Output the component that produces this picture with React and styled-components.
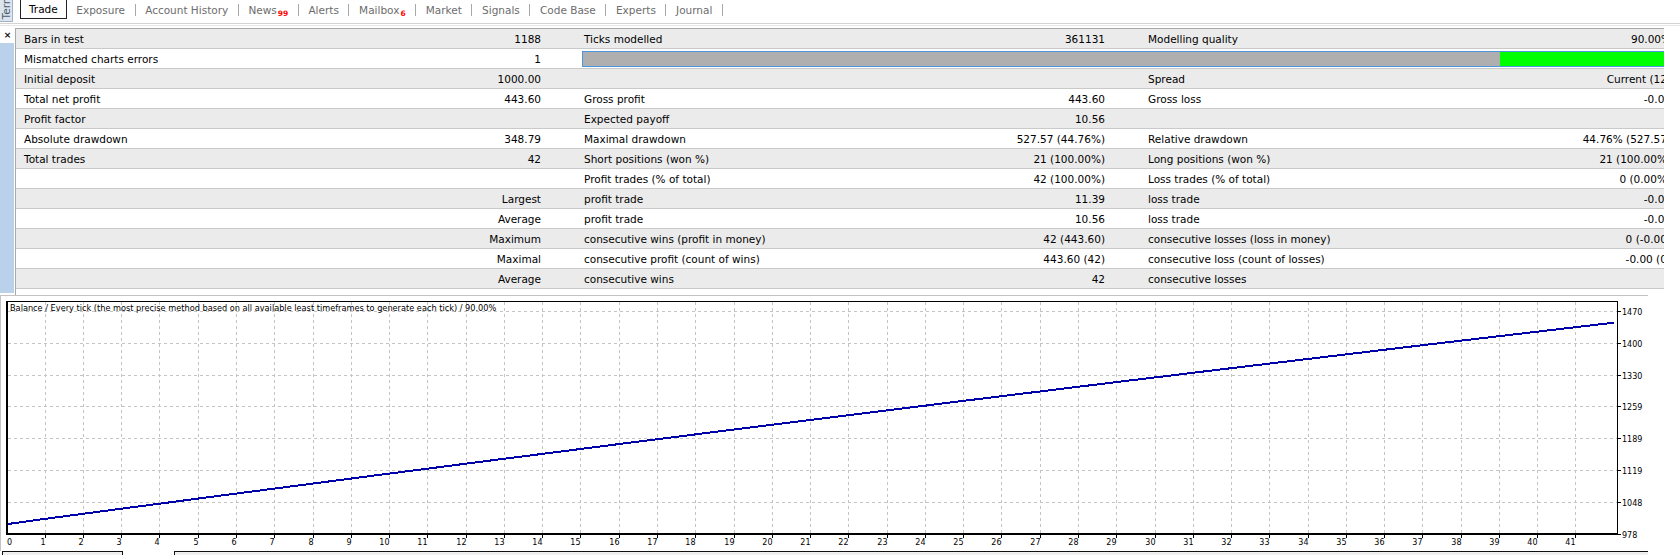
import React from 'react';
import styled, { createGlobalStyle } from 'styled-components';

const GlobalStyle = createGlobalStyle`
  html, body { margin: 0; padding: 0; background: #ffffff; }
  #root { width: 1680px; height: 555px; }
`;

const Page = styled.div`
  width: 1680px;
  height: 555px;
  overflow: hidden;
  background: #ffffff;
  display: flex;
  flex-direction: column;
  font-family: "DejaVu Sans", Verdana, sans-serif;
  font-size: 10.5px;
  color: #000;
`;

/* ---------- top tab bar ---------- */
const TopBar = styled.div`
  height: 23px;
  flex: none;
  display: flex;
  align-items: flex-start;
`;

const CaptionStub = styled.div`
  width: 13px;
  height: 22px;
  flex: none;
  box-sizing: border-box;
  background: #dce5ef;
  border-right: 1px solid #a3b1c2;
  border-bottom: 1px solid #a3b1c2;
  display: flex;
  flex-direction: column;
  justify-content: flex-end;
  align-items: center;
  overflow: hidden;
`;

const CaptionText = styled.span`
  writing-mode: vertical-rl;
  transform: rotate(180deg);
  white-space: nowrap;
  color: #4b5b6c;
  font-size: 10.5px;
  line-height: 12px;
  padding-top: 2px;
`;

const Tabs = styled.div`
  display: flex;
  align-items: flex-start;
  margin-left: 7px;
`;

const Tab = styled.div`
  height: 19px;
  box-sizing: border-box;
  padding: 0 9.6px;
  display: flex;
  align-items: center;
  white-space: nowrap;
  color: #6d6d6d;
`;

const ActiveTab = styled(Tab)`
  padding: 0 8px;
  color: #000;
  background: #fff;
  border: 1px solid #222;
  border-top: none;
`;

const TabSep = styled.div`
  width: 1px;
  height: 12px;
  margin-top: 4px;
  background: #a8a8a8;
  flex: none;
`;

const Badge = styled.span`
  align-self: flex-end;
  margin: 0 0 1px 1px;
  color: #ff0000;
  font-size: 7.5px;
  line-height: 8px;
  font-weight: bold;
`;

const Divider = styled.div`
  height: 3px;
  flex: none;
  box-sizing: border-box;
  border-top: 1px solid #d3d3d3;
  border-bottom: 1px solid #e6e6e6;
  margin-bottom: 2px;
`;

/* ---------- report table ---------- */
const TesterArea = styled.div`
  height: 267px;
  flex: none;
  display: flex;
`;

const SideCaption = styled.div`
  width: 15px;
  flex: none;
  display: flex;
  flex-direction: column;
`;

const CloseMark = styled.div`
  height: 15px;
  padding-bottom: 2px;
  box-sizing: border-box;
  display: flex;
  align-items: center;
  justify-content: center;
  font-size: 9px;
  font-weight: bold;
  color: #111;
`;

const BlueStrip = styled.div`
  flex: 1;
  margin: 0 1px 2px 0;
  background: #b9d1ea;
`;

const Report = styled.div`
  width: 1649px;
  flex: none;
  box-sizing: border-box;
  border-left: 1px solid #a9a9a9;
  border-top: 1px solid #a9a9a9;
  overflow: hidden;
  background: #fff;
`;

const Row = styled.div`
  display: grid;
  grid-template-columns: 562px 564px 566px;
  height: 20px;
  box-sizing: border-box;
  border-bottom: 1px solid #c9c9c9;
  background: ${(p) => (p.$alt ? '#ebebeb' : '#ffffff')};
  width: max-content;
`;

const Cell = styled.div`
  display: flex;
  align-items: center;
  justify-content: space-between;
  padding: 1px 37px 0 ${(p) => (p.$first ? 8 : 6)}px;
  white-space: nowrap;
  min-width: 0;
`;

const QualityCell = styled.div`
  grid-column: 2 / span 2;
  padding: 2px 0 1px 4px;
  display: flex;
`;

const QualityBar = styled.div`
  flex: 1;
  display: flex;
  box-sizing: border-box;
  border: 1px solid #4d94e0;
`;

const BarPart = styled.div`
  flex: ${(p) => (p.$grow ? '1' : `0 0 ${p.$w}px`)};
  background: ${(p) => p.$color};
`;

/* ---------- chart ---------- */
const ChartArea = styled.div`
  width: 1648px;
  height: 256px;
  flex: none;
  box-sizing: border-box;
  border-top: 1px solid #c3c3c3;
  border-left: 1px solid #c3c3c3;
  position: relative;
`;

const ChartTitle = styled.div`
  position: absolute;
  left: 9px;
  top: 8px;
  font-size: 8.2px;
  line-height: 9px;
  white-space: nowrap;
  color: #000;
`;

const ChartSvg = styled.svg`
  display: block;
`;

/* ---------- bottom tabs ---------- */
const BottomBar = styled.div`
  height: 4px;
  flex: none;
  display: flex;
`;

const BottomTab = styled.div`
  width: 121px;
  margin-left: 2px;
  box-sizing: border-box;
  border: 1px solid #111;
  border-bottom: none;
  background: #f0f0f0;
`;

const BottomStrip = styled.div`
  width: 1474px;
  margin-left: 51px;
  box-sizing: border-box;
  border-top: 1px solid #111;
  border-left: 1px solid #111;
  background: #f0f0f0;
`;

const TAB_ITEMS = [
  { label: 'Exposure' },
  { label: 'Account History' },
  { label: 'News', badge: '99' },
  { label: 'Alerts' },
  { label: 'Mailbox', badge: '6' },
  { label: 'Market' },
  { label: 'Signals' },
  { label: 'Code Base' },
  { label: 'Experts' },
  { label: 'Journal' },
];

const ROWS = [
  [['Bars in test', '1188'], ['Ticks modelled', '361131'], ['Modelling quality', '90.00%']],
  'bar',
  [['Initial deposit', '1000.00'], ['', ''], ['Spread', 'Current (12)']],
  [['Total net profit', '443.60'], ['Gross profit', '443.60'], ['Gross loss', '-0.00']],
  [['Profit factor', ''], ['Expected payoff', '10.56'], ['', '']],
  [['Absolute drawdown', '348.79'], ['Maximal drawdown', '527.57 (44.76%)'], ['Relative drawdown', '44.76% (527.57)']],
  [['Total trades', '42'], ['Short positions (won %)', '21 (100.00%)'], ['Long positions (won %)', '21 (100.00%)']],
  [['', ''], ['Profit trades (% of total)', '42 (100.00%)'], ['Loss trades (% of total)', '0 (0.00%)']],
  [['', 'Largest'], ['profit trade', '11.39'], ['loss trade', '-0.00']],
  [['', 'Average'], ['profit trade', '10.56'], ['loss trade', '-0.00']],
  [['', 'Maximum'], ['consecutive wins (profit in money)', '42 (443.60)'], ['consecutive losses (loss in money)', '0 (-0.00)']],
  [['', 'Maximal'], ['consecutive profit (count of wins)', '443.60 (42)'], ['consecutive loss (count of losses)', '-0.00 (0)']],
  [['', 'Average'], ['consecutive wins', '42'], ['consecutive losses', '0']],
];

const Y_LABELS = [978, 1048, 1119, 1189, 1259, 1330, 1400, 1470];

function BalanceChart() {
  const W = 1647;
  const H = 255;
  const left = 5.4;
  const step = 38.27;
  const bottom = 238;
  const labelStep = 31.9;
  const yOf = (v) => bottom - ((v - 978) / 70.2857) * labelStep;
  const xOf = (k) => left + step * k;

  const a = 11.25;
  const b = 9.87;
  const raw = Array.from({ length: 42 }, (_, j) => a - ((a - b) * j) / 41);
  const total = raw.reduce((s, v) => s + v, 0);
  const profits = raw.map((v) => (v * 443.6) / total);
  const pts = [];
  let bal = 1000;
  pts.push([7, yOf(bal)]);
  profits.forEach((p, j) => {
    bal += p;
    pts.push([xOf(j + 1), yOf(bal)]);
  });

  const gridX = Array.from({ length: 41 }, (_, i) => Math.round(xOf(i + 1)) + 0.5);
  const gridY = Y_LABELS.map((_, i) => Math.round(bottom - i * labelStep) + 0.5);

  return (
    <ChartSvg width={W} height={H} viewBox={`0 0 ${W} ${H}`}>
      <g stroke="#c4c4c4" strokeWidth="1" strokeDasharray="3,3" shapeRendering="crispEdges">
        {gridX.map((x) => (
          <line key={`gx${x}`} x1={x} y1={6} x2={x} y2={237} />
        ))}
        {gridY.slice(1).map((y) => (
          <line key={`gy${y}`} x1={7} y1={y} x2={1616} y2={y} />
        ))}
      </g>
      <polyline
        points={pts.map(([x, y]) => `${x.toFixed(1)},${y.toFixed(1)}`).join(' ')}
        fill="none"
        stroke="#0000aa"
        strokeWidth="2"
        shapeRendering="crispEdges"
      />
      <g fill="#000" shapeRendering="crispEdges">
        <rect x={5} y={5} width={1612} height={1} />
        <rect x={1616} y={5} width={1} height={234} />
        <rect x={5} y={5} width={2} height={234} />
        <rect x={5} y={237} width={1612} height={2} />
      </g>
      <g stroke="#000" strokeWidth="1" shapeRendering="crispEdges">
        {gridY.map((y) => (
          <line key={`ty${y}`} x1={1617} y1={y} x2={1620} y2={y} />
        ))}
        {gridX.map((x) => (
          <line key={`tx${x}`} x1={x} y1={239} x2={x} y2={242} />
        ))}
      </g>
      <g fontFamily='"DejaVu Sans", Verdana, sans-serif' fontSize="8" fill="#000">
        {Y_LABELS.map((v, i) => (
          <text key={`ly${v}`} x={1621} y={gridY[i] + 3}>
            {v}
          </text>
        ))}
        <text x={6} y={248.5}>0</text>
        {gridX.map((x, i) => (
          <text key={`lx${i}`} x={x} y={248.5} textAnchor="end">
            {i + 1}
          </text>
        ))}
      </g>
    </ChartSvg>
  );
}

export default function App() {
  return (
    <>
      <GlobalStyle />
      <Page>
        <TopBar>
          <CaptionStub>
            <CaptionText>Terminal</CaptionText>
          </CaptionStub>
          <Tabs>
            <ActiveTab>Trade</ActiveTab>
            {TAB_ITEMS.map((t) => (
              <React.Fragment key={t.label}>
                <Tab>
                  <span>{t.label}</span>
                  {t.badge && <Badge>{t.badge}</Badge>}
                </Tab>
                <TabSep />
              </React.Fragment>
            ))}
          </Tabs>
        </TopBar>
        <Divider />
        <TesterArea>
          <SideCaption>
            <CloseMark>×</CloseMark>
            <BlueStrip />
          </SideCaption>
          <Report>
            {ROWS.map((row, i) =>
              row === 'bar' ? (
                <Row key={i} $alt={i % 2 === 0}>
                  <Cell $first>
                    <span>Mismatched charts errors</span>
                    <span>1</span>
                  </Cell>
                  <QualityCell>
                    <QualityBar>
                      <BarPart $w={917} $color="#afafaf" />
                      <BarPart $grow $color="#00ff00" />
                    </QualityBar>
                  </QualityCell>
                </Row>
              ) : (
                <Row key={i} $alt={i % 2 === 0}>
                  {row.map(([label, value], j) => (
                    <Cell key={j} $first={j === 0}>
                      <span>{label}</span>
                      <span>{value}</span>
                    </Cell>
                  ))}
                </Row>
              )
            )}
          </Report>
        </TesterArea>
        <ChartArea>
          <ChartTitle>
            Balance / Every tick (the most precise method based on all available least timeframes to generate each tick) / 90.00%
          </ChartTitle>
          <BalanceChart />
        </ChartArea>
        <BottomBar>
          <BottomTab />
          <BottomStrip />
        </BottomBar>
      </Page>
    </>
  );
}
